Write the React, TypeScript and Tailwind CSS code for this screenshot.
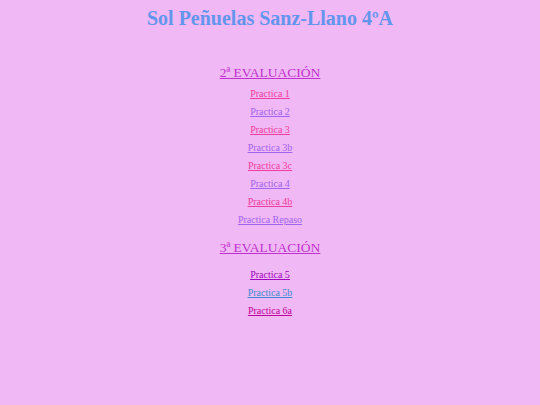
const links2 = [
  { t: "Practica 1", c: "text-[#f03c9c]" },
  { t: "Practica 2", c: "text-[#a064f0]" },
  { t: "Practica 3", c: "text-[#f03c9c]" },
  { t: "Practica 3b", c: "text-[#a064f0]" },
  { t: "Practica 3c", c: "text-[#f03c9c]" },
  { t: "Practica 4", c: "text-[#a064f0]" },
  { t: "Practica 4b", c: "text-[#f03c9c]" },
  { t: "Practica Repaso", c: "text-[#a064f0]" },
];

const links3 = [
  { t: "Practica 5", c: "text-[#a000c0]" },
  { t: "Practica 5b", c: "text-[#3c8cd0]" },
  { t: "Practica 6a", c: "text-[#c00098]" },
];

export default function App() {
  return (
    <div className="min-h-[405px] w-full bg-[#f0b8f4] font-['Liberation_Serif',serif] flex flex-col items-center">
      <h1 className="mt-[6px] text-[20px] leading-[24px] font-bold text-[#6495ed]">
        Sol Peñuelas Sanz-Llano 4ºA
      </h1>

      <a href="#" className="mt-[35px] text-[13.5px] leading-[16px] underline text-[#c030d0]">
        2ª EVALUACIÓN
      </a>
      <div className="mt-[7px] flex flex-col items-center gap-[6px]">
        {links2.map((l) => (
          <a key={l.t} href="#" className={`text-[10px] leading-[12px] underline ${l.c}`}>
            {l.t}
          </a>
        ))}
      </div>

      <a href="#" className="mt-[14px] text-[13.5px] leading-[16px] underline text-[#c030d0]">
        3ª EVALUACIÓN
      </a>
      <div className="mt-[13px] flex flex-col items-center gap-[6px]">
        {links3.map((l) => (
          <a key={l.t} href="#" className={`text-[10px] leading-[12px] underline ${l.c}`}>
            {l.t}
          </a>
        ))}
      </div>
    </div>
  );
}
